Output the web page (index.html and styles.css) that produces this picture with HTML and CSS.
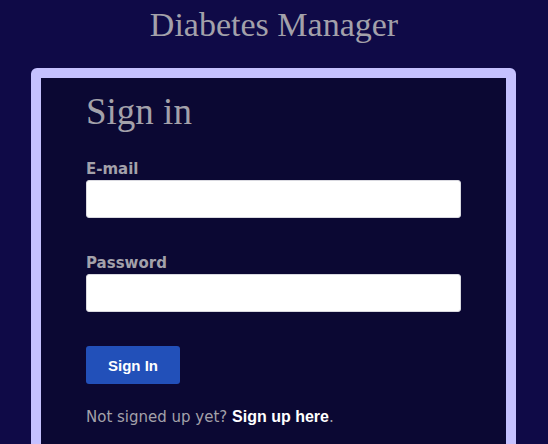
FILE: index.html
```html
<!DOCTYPE html>
<html lang="en">
<head>
<meta charset="utf-8">
<title>Diabetes Manager</title>
<link rel="stylesheet" href="styles.css">
</head>
<body>
<header class="site-header">
  <h1 class="site-title">Diabetes Manager</h1>
</header>
<main class="card">
  <h2 class="card-title">Sign in</h2>
  <form class="form">
    <div class="field">
      <label class="label" for="email">E-mail</label>
      <input class="input" id="email" type="email">
    </div>
    <div class="field">
      <label class="label" for="password">Password</label>
      <input class="input" id="password" type="password">
    </div>
    <button class="btn" type="button">Sign In</button>
  </form>
  <p class="footnote">Not signed up yet? <a class="link" href="#">Sign up here</a>.</p>
</main>
</body>
</html>
```
FILE: styles.css
```css
html, body {
  margin: 0;
  padding: 0;
}
body {
  background: #0f0a47;
  color: #a3a1aa;
  font-family: "DejaVu Sans", Verdana, sans-serif;
  height: 444px;
  overflow: hidden;
}
.site-header {
  display: flex;
  justify-content: center;
  padding: 5px 0 23px;
}
.site-title {
  margin: 0;
  font-family: "Liberation Serif", "Times New Roman", serif;
  font-weight: 400;
  font-size: 34px;
  line-height: 40px;
  color: #a3a1aa;
}
.card {
  margin: 0 32px 0 31px;
  border: 10px solid #c5c1ff;
  border-radius: 6px;
  background: #0b0833;
  padding: 12px 45px 40px;
  min-height: 400px;
}
.card-title {
  margin: 0 0 26px;
  font-family: "Liberation Serif", "Times New Roman", serif;
  font-weight: 400;
  font-size: 37px;
  line-height: 44px;
  color: #a3a1aa;
}
.form {
  display: flex;
  flex-direction: column;
  align-items: flex-start;
}
.field {
  display: flex;
  flex-direction: column;
  align-self: stretch;
  gap: 2px;
  margin-bottom: 36px;
}
.label {
  font-weight: 700;
  font-size: 15px;
  line-height: 18px;
  color: #a3a1aa;
}
.input {
  box-sizing: border-box;
  height: 38px;
  margin: 0;
  border: 1px solid #d9d9e0;
  border-radius: 3px;
  background: #fff;
}
.btn {
  box-sizing: border-box;
  height: 38px;
  width: 94px;
  margin-top: -2px;
  border: 0;
  border-radius: 3px;
  background: #2250b9;
  color: #fff;
  font-family: "Liberation Sans", Arial, sans-serif;
  font-weight: 700;
  font-size: 15px;
}
.footnote {
  margin: 24px 0 0;
  font-size: 15px;
  line-height: 18px;
  color: #a3a1aa;
}
.link {
  color: #fff;
  text-decoration: none;
  font-family: "Liberation Sans", Arial, sans-serif;
  font-weight: 700;
  font-size: 16px;
}
```
